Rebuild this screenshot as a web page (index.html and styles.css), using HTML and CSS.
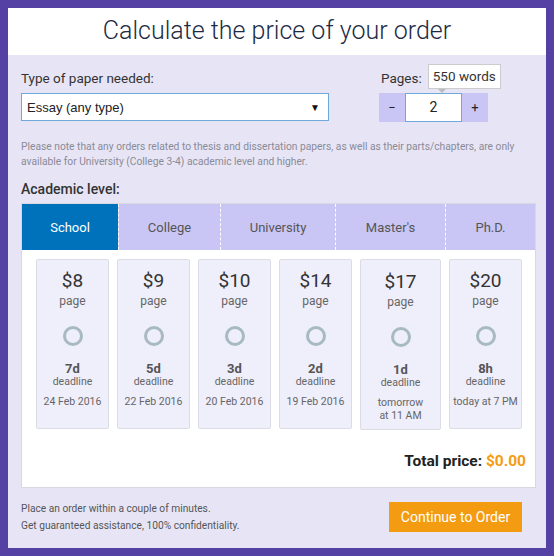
FILE: index.html
```html
<!DOCTYPE html>
<html lang="en">
<head>
  <meta charset="UTF-8" />
  <title>Calculate the price of your order</title>
  <link rel="stylesheet" href="styles.css">
</head>
<body>
  <div class="calc">
    <h1>Calculate the price of your order</h1>
    <div class="calc-body">
      <div class="top-row">
        <div class="paper">
          <label for="paper">Type of paper needed:</label>
          <div class="select">
            <span>Essay (any type)</span>
            <span class="caret">&#9660;</span>
          </div>
        </div>
        <div class="pages">
          <div class="pages-head">
            <label>Pages:</label>
            <span class="words">550 words</span>
          </div>
          <div class="stepper">
            <button class="step">&minus;</button>
            <div class="count">2</div>
            <button class="step">+</button>
          </div>
        </div>
      </div>

      <p class="note">
        Please note that any orders related to thesis and dissertation papers, as well as their parts/chapters, are only
        available for University (College 3-4) academic level and higher.
      </p>

      <h2>Academic level:</h2>
      <div class="levels">
        <div class="tabs">
          <div class="tab active t1">School</div>
          <div class="tab t2">College</div>
          <div class="tab t3">University</div>
          <div class="tab t4">Master's</div>
          <div class="tab t5">Ph.D.</div>
        </div>
        <div class="cards">
          <div class="card">
            <div class="price">$8</div><div class="per">page</div>
            <span class="radio"></span>
            <div class="days">7d</div><div class="dl">deadline</div>
            <div class="date">24 Feb 2016</div>
          </div>
          <div class="card">
            <div class="price">$9</div><div class="per">page</div>
            <span class="radio"></span>
            <div class="days">5d</div><div class="dl">deadline</div>
            <div class="date">22 Feb 2016</div>
          </div>
          <div class="card">
            <div class="price">$10</div><div class="per">page</div>
            <span class="radio"></span>
            <div class="days">3d</div><div class="dl">deadline</div>
            <div class="date">20 Feb 2016</div>
          </div>
          <div class="card">
            <div class="price">$14</div><div class="per">page</div>
            <span class="radio"></span>
            <div class="days">2d</div><div class="dl">deadline</div>
            <div class="date">19 Feb 2016</div>
          </div>
          <div class="card wide">
            <div class="price">$17</div><div class="per">page</div>
            <span class="radio"></span>
            <div class="days">1d</div><div class="dl">deadline</div>
            <div class="date">tomorrow<br>at 11 AM</div>
          </div>
          <div class="card">
            <div class="price">$20</div><div class="per">page</div>
            <span class="radio"></span>
            <div class="days">8h</div><div class="dl">deadline</div>
            <div class="date">today at 7 PM</div>
          </div>
        </div>
        <div class="total">Total price: <span>$0.00</span></div>
      </div>

      <div class="footer">
        <p>Place an order within a couple of minutes.<br>Get guaranteed assistance, 100% confidentiality.</p>
        <button class="order">Continue to Order</button>
      </div>
    </div>
  </div>
</body>
</html>
```

FILE: styles.css
```css
/* --- Global --- */
* { box-sizing: border-box; margin: 0; padding: 0; }
html, body { height: 100%; }
body {
  background: #5540a3;
  padding: 8px;
  font-family: 'Roboto', 'Liberation Sans', sans-serif;
  color: #333;
}

.calc {
  height: 540px;
  background: #e7e5f5;
  display: flex;
  flex-direction: column;
}

h1 {
  background: #fff;
  height: 47px;
  text-align: center;
  font-weight: 300;
  font-size: 25px;
  line-height: 46px;
  color: #1c2b45;
}

.calc-body {
  padding: 10px 10px 0 13px;
  flex: 1;
}

/* --- Top row --- */
.top-row {
  display: flex;
  gap: 50px;
}
label {
  display: block;
  font-size: 13.5px;
  color: #333;
  line-height: 16px;
  margin-top: 5px;
}
.paper label { margin-bottom: 7px; }
.select {
  width: 308px;
  height: 28px;
  background: #fff;
  border: 1px solid #6fa8dc;
  display: flex;
  align-items: center;
  justify-content: space-between;
  padding: 0 8px 0 5px;
  font-family: 'Liberation Sans', Arial, sans-serif;
  font-size: 13px;
  color: #222;
}
.caret { font-size: 10px; color: #111; }

.pages-head {
  display: flex;
  align-items: flex-start;
  gap: 6px;
  height: 28px;
  padding-left: 2px;
}
.words {
  position: relative;
  background: #fff;
  border: 1px solid #ccc;
  font-size: 13.5px;
  padding: 2px 4px;
  line-height: 19px;
  color: #333;
  margin-top: -1px;
}
.words::after {
  content: "";
  position: absolute;
  left: 9px;
  bottom: -5px;
  border: 4px solid transparent;
  border-top: 4px solid #bbb;
  border-bottom: 0;
}
.stepper {
  display: flex;
  height: 29px;
}
.step {
  width: 26px;
  background: #c9c5f5;
  border: none;
  font-family: inherit;
  font-size: 13px;
  color: #222;
}
.count {
  width: 57px;
  background: #fff;
  border: 1px solid #6fa8dc;
  text-align: center;
  line-height: 27px;
  font-size: 14px;
  color: #222;
}

.note {
  margin-top: 17px;
  font-size: 10.25px;
  line-height: 15px;
  color: #8a8a98;
}

h2 {
  margin-top: 11px;
  font-size: 14px;
  font-weight: 500;
  color: #333;
  line-height: 18px;
}

/* --- Levels box --- */
.levels {
  margin-top: 5px;
  width: 515px;
  background: #fff;
  border: 1px solid #d8d8e0;
  padding-bottom: 17px;
}
.tabs {
  display: flex;
  height: 46px;
  background: #c9c5f5;
}
.tab {
  display: flex;
  align-items: center;
  justify-content: center;
  font-size: 13px;
  color: #555;
  border-left: 1px dashed #fff;
}
.tab.t1 { width: 96px; border-left: none; }
.tab.t2 { width: 102px; }
.tab.t3 { width: 115px; }
.tab.t4 { width: 110px; }
.tab.t5 { flex: 1; }
.tab.active { background: #0072bc; color: #fff; }

.cards {
  display: flex;
  gap: 8px;
  padding: 9px 0 0 14px;
  align-items: flex-start;
}
.card {
  width: 73px;
  height: 170px;
  background: #efeefb;
  border: 1px solid #dcdce4;
  border-radius: 2px;
  text-align: center;
  color: #666;
  padding-top: 9px;
}
.card.wide { width: 81px; height: 171px; padding-top: 10px; }
.price { font-size: 19px; line-height: 24px; color: #333; }
.per { font-size: 12px; line-height: 14px; margin-top: 1px; }
.radio {
  display: block;
  width: 20px;
  height: 20px;
  margin: 18px auto 0;
  border: 3px solid #a7bac2;
  border-radius: 50%;
}
.days { margin-top: 16px; font-size: 13px; font-weight: 700; line-height: 14px; color: #555; }
.dl { font-size: 10.5px; line-height: 12px; }
.date { margin-top: 7px; font-size: 10.5px; line-height: 13px; }

.total {
  text-align: right;
  padding-right: 9px;
  margin-top: 22px;
  font-size: 15.5px;
  line-height: 18px;
  font-weight: 700;
  color: #222;
}
.total span { color: #f39c12; }

/* --- Footer --- */
.footer {
  display: flex;
  justify-content: space-between;
  align-items: center;
  margin-top: 12px;
  padding-right: 14px;
}
.footer p {
  font-size: 10.2px;
  line-height: 17px;
  color: #555;
}
.order {
  width: 133px;
  height: 30px;
  background: #f39c12;
  border: none;
  color: #fff;
  font-family: inherit;
  font-size: 14px;
}
```
